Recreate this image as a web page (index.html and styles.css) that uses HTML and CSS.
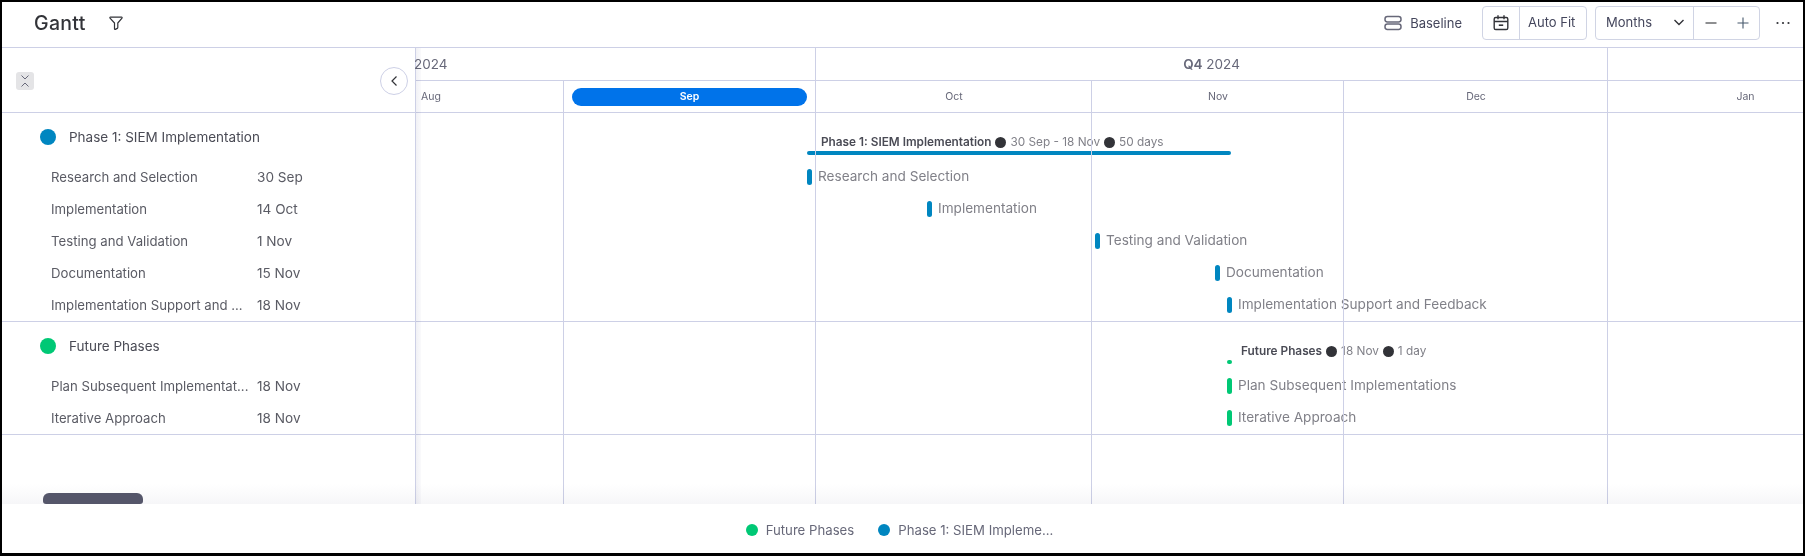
FILE: index.html
```html
<!DOCTYPE html>
<html lang="en">
<head>
	<meta charset="UTF-8">
	<title>Gantt</title>
	<link rel="stylesheet" href="styles.css">
</head>
<body>
	<div class="frame">
		<div class="topbar">
			<h1 class="title">Gantt</h1>
			<svg class="filter-icon" width="16" height="16" viewBox="0 0 16 16"><path d="M2.4 2.2h11.2c.5 0 .7.5.4.9L9.8 8v4.6c0 .4-.2.6-.5.8l-2 1c-.4.2-.8-.1-.8-.5V8L2 3.1c-.3-.4-.1-.9.4-.9z" fill="none" stroke="#323338" stroke-width="1.2" stroke-linejoin="round"/></svg>
			<div class="spacer"></div>
			<div class="baseline">
				<svg width="18" height="18" viewBox="0 0 18 18"><rect x="1" y="2.5" width="16" height="5.5" rx="2.4" fill="none" stroke="#676879" stroke-width="1.5"/><rect x="1" y="10" width="16" height="5.5" rx="2.4" fill="none" stroke="#676879" stroke-width="1.5"/></svg>
				<span>Baseline</span>
			</div>
			<div class="btn-group fit-group">
				<div class="btn-cell cal-cell">
					<svg width="18" height="18" viewBox="0 0 18 18"><rect x="2.2" y="3.5" width="13.6" height="12" rx="1.6" fill="none" stroke="#323338" stroke-width="1.4"/><path d="M2.2 7.5h13.6M6 1.2v4M12 1.2v4" fill="none" stroke="#323338" stroke-width="1.4"/><path d="M6.8 11.2h4.4" stroke="#323338" stroke-width="1.6"/></svg>
				</div>
				<div class="btn-cell fit-cell">Auto Fit</div>
			</div>
			<div class="btn-group zoom-group">
				<div class="btn-cell months-cell">
					<span>Months</span>
					<svg width="12" height="12" viewBox="0 0 12 12"><path d="M1.5 4l4.5 4.5L10.500 4" fill="none" stroke="#323338" stroke-width="1.4"/></svg>
				</div>
				<div class="btn-cell zoom-cell">
					<svg width="14" height="14" viewBox="0 0 14 14"><path d="M1.500 7h11" stroke="#323338" stroke-width="1.1"/></svg>
					<svg width="14" height="14" viewBox="0 0 14 14"><path d="M1.500 7h11M7 1.500v11" stroke="#46586c" stroke-width="1.1"/></svg>
				</div>
			</div>
			<svg class="more-icon" width="16" height="16" viewBox="0 0 16 16"><circle cx="2.500" cy="8" r="1.100" fill="#323338"/><circle cx="8" cy="8" r="1.100" fill="#323338"/><circle cx="13.500" cy="8" r="1.100" fill="#323338"/></svg>
		</div>

		<div class="main">
			<div class="side">
				<div class="side-head">
					<div class="collapse-btn">
						<svg width="10" height="14" viewBox="0 0 10 14"><path d="M1.500 1.500L5 5l3.500-3.500M1.500 12.500L5 9l3.500 3.500" fill="none" stroke="#676879" stroke-width="1"/></svg>
					</div>
				</div>
				<div class="group">
					<div class="group-row"><span class="dot dot-blue"></span>Phase 1: SIEM Implementation</div>
					<div class="task-row"><span class="task-name">Research and Selection</span><span class="task-date">30 Sep</span></div>
					<div class="task-row"><span class="task-name">Implementation</span><span class="task-date">14 Oct</span></div>
					<div class="task-row"><span class="task-name">Testing and Validation</span><span class="task-date">1 Nov</span></div>
					<div class="task-row"><span class="task-name">Documentation</span><span class="task-date">15 Nov</span></div>
					<div class="task-row"><span class="task-name">Implementation Support and ...</span><span class="task-date">18 Nov</span></div>
				</div>
				<div class="group">
					<div class="group-row"><span class="dot dot-green"></span>Future Phases</div>
					<div class="task-row"><span class="task-name">Plan Subsequent Implementat...</span><span class="task-date">18 Nov</span></div>
					<div class="task-row"><span class="task-name">Iterative Approach</span><span class="task-date">18 Nov</span></div>
				</div>
				<div class="collapse-side">
					<svg width="10" height="12" viewBox="0 0 10 12"><path d="M7.500 1.500L3 6l4.500 4.500" fill="none" stroke="#323338" stroke-width="1.200"/></svg>
				</div>
			</div>

			<div class="chart">
				<div class="quarters">
					<div class="quarter q3">2024</div>
					<div class="quarter q4"><b>Q4</b>&nbsp;2024</div>
					<div class="quarter q1"></div>
				</div>
				<div class="months">
					<div class="month m-aug aug-label">Aug</div>
					<div class="month m-sep"><span class="sep-pill">Sep</span></div>
					<div class="month m-oct">Oct</div>
					<div class="month m-nov">Nov</div>
					<div class="month m-dec">Dec</div>
					<div class="month m-jan jan-label">Jan</div>
				</div>

				<div class="chart-group">
					<div class="phase-row" style="margin-left: 391px">
						<div class="phase-label"><b>Phase 1: SIEM Implementation</b><i></i>30 Sep - 18 Nov<i></i>50 days</div>
						<div class="phase-bar bar-blue" style="width: 424px"></div>
					</div>
					<div class="bar-row" style="margin-left: 391px"><span class="bar bar-blue"></span><span class="bar-text">Research and Selection</span></div>
					<div class="bar-row" style="margin-left: 511px"><span class="bar bar-blue"></span><span class="bar-text">Implementation</span></div>
					<div class="bar-row" style="margin-left: 679px"><span class="bar bar-blue"></span><span class="bar-text">Testing and Validation</span></div>
					<div class="bar-row" style="margin-left: 799px"><span class="bar bar-blue"></span><span class="bar-text">Documentation</span></div>
					<div class="bar-row" style="margin-left: 811px"><span class="bar bar-blue"></span><span class="bar-text">Implementation Support and Feedback</span></div>
				</div>
				<div class="chart-group">
					<div class="phase-row" style="margin-left: 811px">
						<div class="phase-label"><b>Future Phases</b><i></i>18 Nov<i></i>1 day</div>
						<div class="phase-bar bar-green" style="width: 5px"></div>
					</div>
					<div class="bar-row" style="margin-left: 811px"><span class="bar bar-green"></span><span class="bar-text">Plan Subsequent Implementations</span></div>
					<div class="bar-row" style="margin-left: 811px"><span class="bar bar-green"></span><span class="bar-text">Iterative Approach</span></div>
				</div>

				<div class="grid-lines">
					<div class="m-aug"></div>
					<div class="m-sep"></div>
					<div class="m-oct"></div>
					<div class="m-nov"></div>
					<div class="m-dec"></div>
				</div>
				<div class="side-shade"></div>
			</div>

			<div class="bottom-fade"></div>
			<div class="scroll-thumb"></div>
		</div>

		<div class="legend">
			<span class="legend-item"><span class="legend-dot dot-green"></span>Future Phases</span>
			<span class="legend-item"><span class="legend-dot dot-blue"></span>Phase 1: SIEM Impleme...</span>
		</div>
	</div>
</body>
</html>
```

FILE: styles.css
```css
*{
	margin: 0;
	padding: 0;
	box-sizing: border-box;
}
body{
	width: 1805px;
	height: 556px;
	overflow: hidden;
	font-family: "Inter", "Noto Sans", sans-serif;
	font-size: 13px;
	color: #323338;
	background-color: #fff;
}
.frame{
	width: 1805px;
	height: 556px;
	border: 2px solid #000;
	border-bottom-width: 3px;
	display: flex;
	flex-direction: column;
}

/* top bar */
.topbar{
	height: 46px;
	flex: none;
	display: flex;
	align-items: center;
	border-bottom: 1px solid #cdd0e6;
	padding-left: 32px;
	padding-bottom: 3px;
}
.title{
	font-family: "Inter", sans-serif;
	font-size: 19.5px;
	font-weight: 500;
	letter-spacing: 0.3px;
	width: 74px;
}
.spacer{
	flex: 1;
}
.baseline{
	display: flex;
	align-items: center;
	gap: 8px;
	color: #44465c;
	margin-right: 20px;
}
.btn-group{
	height: 34px;
	display: flex;
	border: 1px solid #d0d4e4;
	border-radius: 4px;
	margin-right: 8px;
}
.btn-cell{
	display: flex;
	align-items: center;
}
.cal-cell{
	width: 37px;
	justify-content: center;
	border-right: 1px solid #d0d4e4;
}
.fit-cell{
	padding-left: 8px;
	padding-bottom: 2px;
	width: 66px;
	color: #44465c;
}
.zoom-group{
	margin-right: 15px;
}
.months-cell{
	width: 98px;
	padding-left: 10px;
	justify-content: space-between;
	padding-right: 8px;
	padding-bottom: 2px;
	border-right: 1px solid #d0d4e4;
	color: #44465c;
}
.zoom-cell{
	width: 65px;
	padding-left: 10px;
	gap: 18px;
}
.more-icon{
	margin-right: 12px;
}

/* main area */
.main{
	flex: 1;
	display: flex;
	position: relative;
	overflow: hidden;
}
.side{
	width: 414px;
	flex: none;
	border-right: 1px solid #cdd0e6;
	position: relative;
}
.side-head{
	height: 65px;
	border-bottom: 1px solid #cdd0e6;
	padding: 24px 0 0 14px;
}
.collapse-btn{
	width: 18px;
	height: 18px;
	background-color: #e4e4e6;
	border-radius: 3px;
	display: flex;
	align-items: center;
	justify-content: center;
}
.collapse-side{
	position: absolute;
	left: 378px;
	top: 19px;
	width: 28px;
	height: 28px;
	border: 1px solid #cdd0e6;
	border-radius: 50%;
	background-color: #fff;
	display: flex;
	align-items: center;
	justify-content: center;
}
.group{
	border-bottom: 1px solid #cdd0e6;
}
.group-row{
	height: 48px;
	display: flex;
	align-items: center;
	padding-left: 38px;
	font-size: 13.5px;
	color: #4a4b55;
}
.dot{
	width: 16px;
	height: 16px;
	border-radius: 50%;
	margin-right: 13px;
}
.dot-blue{
	background-color: #0086c0;
}
.dot-green{
	background-color: #00c875;
}
.task-row{
	height: 32px;
	display: flex;
	align-items: center;
	padding-left: 49px;
	font-size: 13.2px;
	color: #5a5b64;
}
.task-name{
	width: 206px;
	white-space: nowrap;
}
.task-date{
	font-size: 13.6px;
}

/* chart */
.chart{
	flex: 1;
	position: relative;
}
.quarters{
	height: 33px;
	display: flex;
	border-bottom: 1px solid #cdd0e6;
	color: #676879;
}
.quarter{
	display: flex;
	align-items: center;
	font-size: 13.5px;
}
.q3{
	width: 402px;
	margin-left: -2px;
	border-right: 1px solid #cdd0e6;
}
.q4{
	width: 792px;
	justify-content: center;
	border-right: 1px solid #cdd0e6;
}
.q4 b{
	font-weight: 600;
}
.q1{
	flex: 1;
}
.months{
	height: 32px;
	display: flex;
	border-bottom: 1px solid #cdd0e6;
}
.month{
	display: flex;
	align-items: center;
	justify-content: center;
	font-size: 10.5px;
	color: #676879;
}
.m-aug{
	width: 148px;
}
.m-sep{
	width: 252px;
}
.m-oct{
	width: 276px;
}
.m-nov{
	width: 252px;
}
.m-dec{
	width: 264px;
}
.m-jan{
	flex: 1;
}
.aug-label{
	justify-content: flex-start;
	padding-left: 5px;
}
.jan-label{
	padding-left: 80px;
}
.sep-pill{
	width: 235px;
	height: 18px;
	margin-left: 8px;
	margin-right: 9px;
	flex: none;
	border-radius: 9px;
	background-color: #0073ea;
	color: #fff;
	font-weight: 600;
	text-align: center;
	line-height: 18px;
}
.chart-group{
	border-bottom: 1px solid #cdd0e6;
}
.phase-row{
	height: 48px;
	padding-top: 20px;
}
.phase-label{
	height: 18px;
	margin-left: 14px;
	display: flex;
	align-items: center;
	font-size: 11.8px;
	color: #808088;
	white-space: nowrap;
}
.phase-label b{
	font-weight: 600;
	color: #4a4b55;
}
.phase-label i{
	width: 11px;
	height: 11px;
	margin: 0 4px;
	border-radius: 50%;
	background-color: #323338;
}
.phase-bar{
	height: 4px;
	border-radius: 2px;
}
.bar-row{
	height: 32px;
	display: flex;
	align-items: center;
	gap: 6px;
	font-size: 13.6px;
	color: #808088;
	white-space: nowrap;
}
.bar-text{
	margin-bottom: 2px;
}
.bar{
	width: 5px;
	height: 16px;
	border-radius: 3px;
}
.bar-blue{
	background-color: #0086c0;
}
.bar-green{
	background-color: #00c875;
}
.grid-lines{
	position: absolute;
	left: 0;
	top: 33px;
	bottom: 0;
	display: flex;
	pointer-events: none;
}
.grid-lines div{
	border-right: 1px solid #cdd0e6;
}
.side-shade{
	position: absolute;
	left: 0;
	top: 0;
	bottom: 0;
	width: 5px;
	background: linear-gradient(to right, #f1f1f5, #fafafc);
	mix-blend-mode: multiply;
}
.bottom-fade{
	position: absolute;
	left: 0;
	right: 0;
	bottom: 0;
	height: 20px;
	background: linear-gradient(to bottom, #fff, #f6f6f8);
	mix-blend-mode: multiply;
}
.scroll-thumb{
	position: absolute;
	left: 41px;
	bottom: 0;
	width: 100px;
	height: 11px;
	border-radius: 6px 6px 3px 3px;
	background-color: #55566a;
}

/* legend */
.legend{
	height: 49px;
	flex: none;
	display: flex;
	align-items: center;
	justify-content: center;
	gap: 24px;
	padding-right: 6px;
	padding-top: 3px;
	font-size: 13.2px;
	color: #676879;
}
.legend-item{
	display: flex;
	align-items: center;
	gap: 8px;
}
.legend-dot{
	width: 12px;
	height: 12px;
	border-radius: 50%;
}
```
